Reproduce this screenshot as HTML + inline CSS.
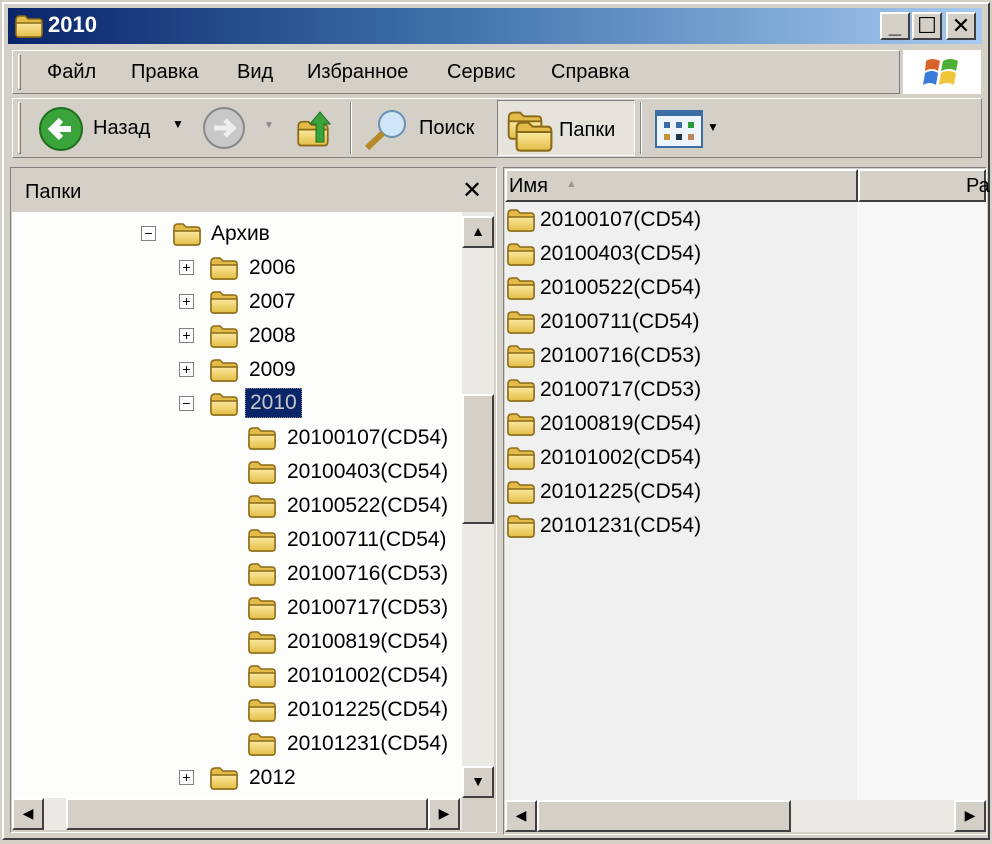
<!DOCTYPE html>
<html><head><meta charset="utf-8"><style>
*{margin:0;padding:0;box-sizing:border-box}
body{width:992px;height:844px;background:#d4d0c8;position:relative;overflow:hidden;font-family:"Liberation Sans","DejaVu Sans",sans-serif;font-size:20px;color:#000}
.a{position:absolute}
.win{left:2px;top:2px;width:988px;height:838px;border:2px solid #fff;border-right-color:#404040;border-bottom-color:#404040;background:#d4d0c8}
.title{left:8px;top:8px;width:974px;height:36px;background:linear-gradient(90deg,#0a246a 0%,#3f72aa 45%,#a6caf0 100%)}
.tb{top:12px;width:30px;height:28px;background:#d4d0c8;border:2px solid #fff;border-right-color:#404040;border-bottom-color:#404040;font-weight:bold;text-align:center;line-height:24px;font-size:22px}
.bar{border:1px solid #fff;border-right-color:#808080;border-bottom-color:#808080}
.t{white-space:nowrap}
.n{font-size:21px}
.fold{width:30px;height:24px}
.pm{width:15px;height:15px;border:1px solid #808080;background:#fff;font-size:14px;line-height:12px;text-align:center;color:#000}
.sb{background:#d4d0c8;border:2px solid #fff;border-right-color:#404040;border-bottom-color:#404040}
</style></head><body>
<svg width="0" height="0" style="position:absolute"><defs>
<linearGradient id="g" x1="0" y1="0" x2="0" y2="1"><stop offset="0" stop-color="#fbe9a0"/><stop offset="1" stop-color="#e3bd45"/></linearGradient>
<symbol id="f" viewBox="0 0 30 24"><path d="M2 6 Q2 2 6 2 H11 L14 5 H25 Q28 5 28 8 V19 Q28 23 25 23 H5 Q2 23 2 20Z" fill="#e2bb48" stroke="#8a6a18" stroke-width="1.5"/><path d="M2 9 H28 V20 Q28 23 25 23 H5 Q2 23 2 20Z" fill="url(#g)" stroke="#8a6a18" stroke-width="1.5"/></symbol>
</defs></svg>
<div class="a win"></div>
<div class="a title"></div>
<svg class="a" style="left:14px;top:13px" width="30" height="26"><use href="#f"/></svg>
<div class="a t" style="left:48px;top:12px;color:#fff;font-weight:bold;font-size:22px">2010</div>
<div class="a tb" style="left:880px">_</div>
<div class="a tb" style="left:912px">☐</div>
<div class="a tb" style="left:946px">✕</div>
<div class="a bar" style="left:12px;top:50px;width:888px;height:44px"></div>
<div class="a" style="left:18px;top:54px;width:3px;height:36px;border:1px solid #fff;border-right-color:#808080;border-bottom-color:#808080"></div>
<div class="a t" style="left:47px;top:61px">Файл</div>
<div class="a t" style="left:131px;top:61px">Правка</div>
<div class="a t" style="left:237px;top:61px">Вид</div>
<div class="a t" style="left:307px;top:61px">Избранное</div>
<div class="a t" style="left:447px;top:61px">Сервис</div>
<div class="a t" style="left:551px;top:61px">Справка</div>
<div class="a" style="left:903px;top:50px;width:78px;height:44px;background:#fff"></div>
<svg class="a" style="left:922px;top:55px" width="40" height="36"><path d="M4 6 Q10 2 18 6 L16 16 Q10 12 3 16Z" fill="#d9642a"/><path d="M21 6 Q28 2 36 6 L34 16 Q28 12 19 16Z" fill="#4caf36"/><path d="M3 18 Q10 14 16 18 L14 30 Q8 26 1 30Z" fill="#3a7ad8"/><path d="M19 18 Q26 14 34 18 L32 30 Q26 26 17 30Z" fill="#efc63a"/></svg>
<div class="a bar" style="left:12px;top:98px;width:970px;height:60px"></div>
<div class="a" style="left:18px;top:102px;width:3px;height:52px;border:1px solid #fff;border-right-color:#808080;border-bottom-color:#808080"></div>
<svg class="a" style="left:38px;top:106px" width="46" height="46"><circle cx="23" cy="23" r="21" fill="#3aa33a" stroke="#1e6e1e" stroke-width="2"/><path d="M33 23 H16 M23 14 L14 23 L23 32" stroke="#fff" stroke-width="6" fill="none"/></svg>
<div class="a t" style="left:93px;top:117px">Назад</div>
<div class="a t" style="left:172px;top:117px;font-size:12px">▼</div>
<svg class="a" style="left:202px;top:106px" width="44" height="44"><circle cx="22" cy="22" r="20" fill="#c8c8c8" stroke="#888" stroke-width="2"/><path d="M12 22 H30 M23 14 L31 22 L23 30" stroke="#eee" stroke-width="5" fill="none"/></svg>
<div class="a t" style="left:264px;top:120px;font-size:10px;color:#888">▼</div>
<svg class="a" style="left:296px;top:106px" width="40" height="46"><use href="#f" x="0" y="12" width="34" height="30"/><path d="M20 36 V18 H14 L24 6 L34 18 H28 V36Z" fill="#3aa33a" stroke="#1e6e1e"/></svg>
<div class="a" style="left:350px;top:102px;width:2px;height:52px;border-left:1px solid #808080;border-right:1px solid #fff"></div>
<svg class="a" style="left:362px;top:106px" width="50" height="46"><circle cx="30" cy="18" r="13" fill="#cfe6f8" stroke="#6a8fb0" stroke-width="2"/><path d="M21 27 L5 42" stroke="#b48a2a" stroke-width="6"/></svg>
<div class="a t" style="left:419px;top:117px">Поиск</div>
<div class="a" style="left:497px;top:100px;width:138px;height:56px;background:#e6e3dc;border:1px solid #808080;border-right-color:#fff;border-bottom-color:#fff"></div>
<svg class="a" style="left:505px;top:110px" width="50" height="42"><use href="#f" x="0" y="0" width="40" height="30"/><use href="#f" x="8" y="10" width="42" height="32"/></svg>
<div class="a t" style="left:559px;top:119px">Папки</div>
<div class="a" style="left:640px;top:102px;width:2px;height:52px;border-left:1px solid #808080;border-right:1px solid #fff"></div>
<svg class="a" style="left:655px;top:110px" width="50" height="38"><rect x="1" y="1" width="46" height="36" fill="#eef4fc" stroke="#3a6ea5" stroke-width="2"/><rect x="1" y="1" width="46" height="5" fill="#3a6ea5"/><g fill="#3a6ea5"><rect x="9" y="12" width="6" height="6"/><rect x="21" y="12" width="6" height="6"/><rect x="33" y="12" width="6" height="6" fill="#2a9a3a"/><rect x="9" y="24" width="6" height="6" fill="#c8943a"/><rect x="21" y="24" width="6" height="6" fill="#234"/><rect x="33" y="24" width="6" height="6" fill="#b8865a"/></g></svg>
<div class="a t" style="left:707px;top:120px;font-size:12px">▼</div>
<div class="a" style="left:10px;top:167px;width:487px;height:666px;border:1px solid #808080;border-right-color:#fff;border-bottom-color:#fff"></div>
<div class="a t" style="left:25px;top:181px">Папки</div>
<div class="a t" style="left:462px;top:176px;font-size:24px">✕</div>
<div class="a" style="left:12px;top:212px;width:450px;height:586px;background:#fdfdfb"></div>
<div class="a" style="left:462px;top:212px;width:32px;height:586px;background:#ebe9e4"></div>
<div class="a sb" style="left:462px;top:216px;width:32px;height:32px;font-size:14px;text-align:center;line-height:26px">▲</div>
<div class="a sb" style="left:462px;top:394px;width:32px;height:130px"></div>
<div class="a sb" style="left:462px;top:766px;width:32px;height:32px;font-size:14px;text-align:center;line-height:26px">▼</div>
<div class="a" style="left:12px;top:798px;width:450px;height:32px;background:#ebe9e4"></div>
<div class="a sb" style="left:12px;top:798px;width:32px;height:32px;font-size:14px;text-align:center;line-height:26px">◀</div>
<div class="a sb" style="left:66px;top:798px;width:362px;height:32px"></div>
<div class="a sb" style="left:428px;top:798px;width:32px;height:32px;font-size:14px;text-align:center;line-height:26px">▶</div>
<div class="a" style="left:462px;top:798px;width:32px;height:32px;background:#d4d0c8"></div>

<div class="a pm" style="left:141px;top:226px">−</div><svg class="a fold" style="left:172px;top:222px"><use href="#f"/></svg><div class="a t n" style="left:211px;top:222px">Архив</div>
<div class="a pm" style="left:179px;top:260px">+</div><svg class="a fold" style="left:209px;top:256px"><use href="#f"/></svg><div class="a t n" style="left:249px;top:256px">2006</div>
<div class="a pm" style="left:179px;top:294px">+</div><svg class="a fold" style="left:209px;top:290px"><use href="#f"/></svg><div class="a t n" style="left:249px;top:290px">2007</div>
<div class="a pm" style="left:179px;top:328px">+</div><svg class="a fold" style="left:209px;top:324px"><use href="#f"/></svg><div class="a t n" style="left:249px;top:324px">2008</div>
<div class="a pm" style="left:179px;top:362px">+</div><svg class="a fold" style="left:209px;top:358px"><use href="#f"/></svg><div class="a t n" style="left:249px;top:358px">2009</div>
<div class="a pm" style="left:179px;top:396px">−</div><svg class="a fold" style="left:209px;top:392px"><use href="#f"/></svg><div class="a t n" style="left:245px;top:388px;padding:2px 4px;background:#0a246a;color:#c8c8c8;border:1px dotted #888">2010</div>
<svg class="a fold" style="left:247px;top:426px"><use href="#f"/></svg><div class="a t n" style="left:287px;top:426px">20100107(CD54)</div>
<svg class="a fold" style="left:247px;top:460px"><use href="#f"/></svg><div class="a t n" style="left:287px;top:460px">20100403(CD54)</div>
<svg class="a fold" style="left:247px;top:494px"><use href="#f"/></svg><div class="a t n" style="left:287px;top:494px">20100522(CD54)</div>
<svg class="a fold" style="left:247px;top:528px"><use href="#f"/></svg><div class="a t n" style="left:287px;top:528px">20100711(CD54)</div>
<svg class="a fold" style="left:247px;top:562px"><use href="#f"/></svg><div class="a t n" style="left:287px;top:562px">20100716(CD53)</div>
<svg class="a fold" style="left:247px;top:596px"><use href="#f"/></svg><div class="a t n" style="left:287px;top:596px">20100717(CD53)</div>
<svg class="a fold" style="left:247px;top:630px"><use href="#f"/></svg><div class="a t n" style="left:287px;top:630px">20100819(CD54)</div>
<svg class="a fold" style="left:247px;top:664px"><use href="#f"/></svg><div class="a t n" style="left:287px;top:664px">20101002(CD54)</div>
<svg class="a fold" style="left:247px;top:698px"><use href="#f"/></svg><div class="a t n" style="left:287px;top:698px">20101225(CD54)</div>
<svg class="a fold" style="left:247px;top:732px"><use href="#f"/></svg><div class="a t n" style="left:287px;top:732px">20101231(CD54)</div>
<div class="a pm" style="left:179px;top:770px">+</div><svg class="a fold" style="left:209px;top:766px"><use href="#f"/></svg><div class="a t n" style="left:249px;top:766px">2012</div>

<div class="a" style="left:503px;top:167px;width:484px;height:668px;border:1px solid #808080;border-right-color:#fff;border-bottom-color:#fff"></div>
<div class="a sb" style="left:505px;top:169px;width:353px;height:33px"></div>
<div class="a sb" style="left:858px;top:169px;width:128px;height:33px"></div>
<div class="a t" style="left:509px;top:175px">Имя</div>
<div class="a t" style="left:566px;top:178px;font-size:11px;color:#999">▲</div>
<div class="a t" style="left:966px;top:175px">Ра</div>
<div class="a" style="left:505px;top:202px;width:352px;height:598px;background:#f0f0f0"></div>
<div class="a" style="left:857px;top:202px;width:130px;height:598px;background:#f8f8f8"></div>
<svg class="a fold" style="left:506px;top:208px"><use href="#f"/></svg><div class="a t n" style="left:540px;top:208px">20100107(CD54)</div>
<svg class="a fold" style="left:506px;top:242px"><use href="#f"/></svg><div class="a t n" style="left:540px;top:242px">20100403(CD54)</div>
<svg class="a fold" style="left:506px;top:276px"><use href="#f"/></svg><div class="a t n" style="left:540px;top:276px">20100522(CD54)</div>
<svg class="a fold" style="left:506px;top:310px"><use href="#f"/></svg><div class="a t n" style="left:540px;top:310px">20100711(CD54)</div>
<svg class="a fold" style="left:506px;top:344px"><use href="#f"/></svg><div class="a t n" style="left:540px;top:344px">20100716(CD53)</div>
<svg class="a fold" style="left:506px;top:378px"><use href="#f"/></svg><div class="a t n" style="left:540px;top:378px">20100717(CD53)</div>
<svg class="a fold" style="left:506px;top:412px"><use href="#f"/></svg><div class="a t n" style="left:540px;top:412px">20100819(CD54)</div>
<svg class="a fold" style="left:506px;top:446px"><use href="#f"/></svg><div class="a t n" style="left:540px;top:446px">20101002(CD54)</div>
<svg class="a fold" style="left:506px;top:480px"><use href="#f"/></svg><div class="a t n" style="left:540px;top:480px">20101225(CD54)</div>
<svg class="a fold" style="left:506px;top:514px"><use href="#f"/></svg><div class="a t n" style="left:540px;top:514px">20101231(CD54)</div>
<div class="a" style="left:505px;top:800px;width:482px;height:32px;background:#ebe9e4"></div>
<div class="a sb" style="left:505px;top:800px;width:32px;height:32px;font-size:14px;text-align:center;line-height:26px">◀</div>
<div class="a sb" style="left:537px;top:800px;width:254px;height:32px"></div>
<div class="a sb" style="left:954px;top:800px;width:32px;height:32px;font-size:14px;text-align:center;line-height:26px">▶</div>
</body></html>
